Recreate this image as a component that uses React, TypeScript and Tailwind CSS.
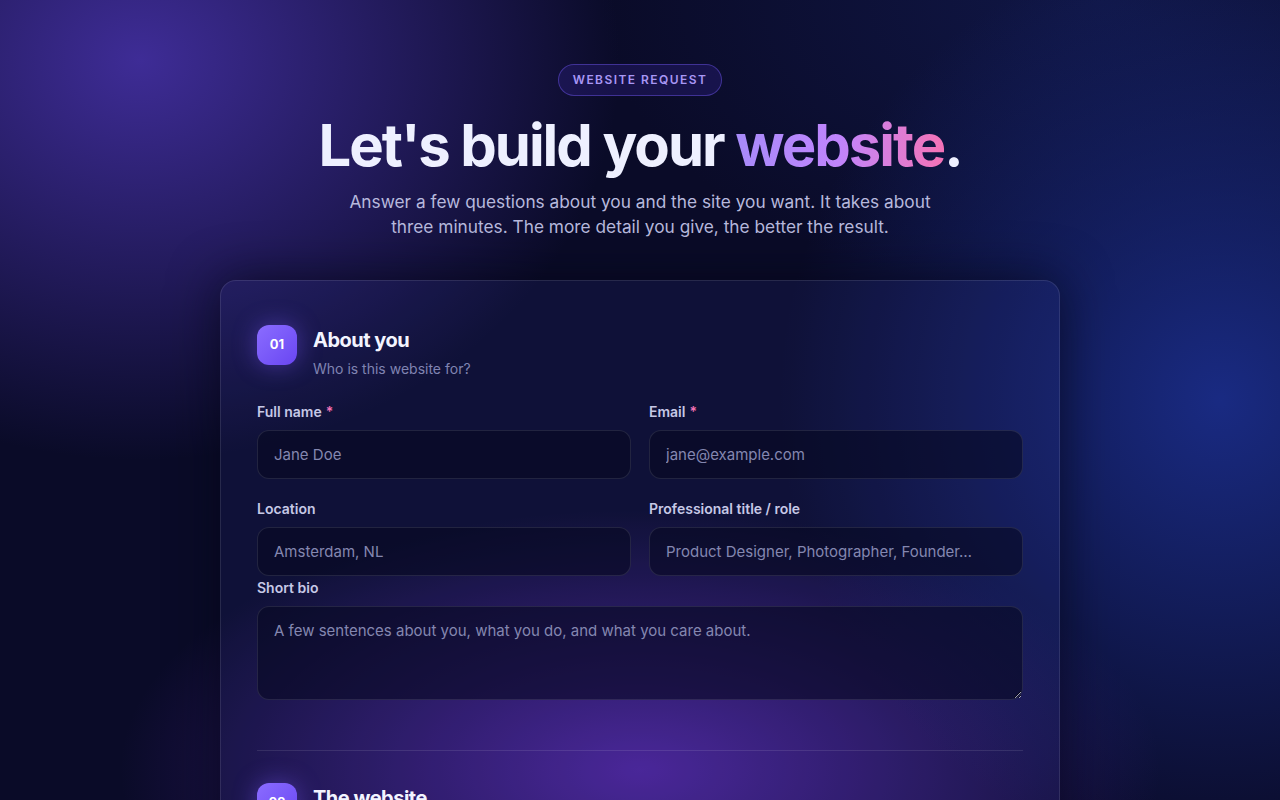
import React from "react";

type FieldProps = {
  label: string;
  placeholder: string;
  required?: boolean;
  type?: string;
};

function Label({ text, required }: { text: string; required?: boolean }) {
  return (
    <label className="block text-sm font-semibold leading-5 text-[#c6c8e6]">
      {text}
      {required && <span className="ml-1 text-[#f472b6]">*</span>}
    </label>
  );
}

function Field({ label, placeholder, required, type = "text" }: FieldProps) {
  return (
    <div className="flex flex-col gap-2">
      <Label text={label} required={required} />
      <input
        type={type}
        placeholder={placeholder}
        className="h-[49px] w-full rounded-xl border border-white/10 bg-[#070822]/60 px-4 text-[15px] text-white placeholder:text-[#8487b0] outline-none"
      />
    </div>
  );
}

function StepHeader({ num, title, sub }: { num: string; title: string; sub: string }) {
  return (
    <div className="flex items-start gap-4">
      <div className="flex h-10 w-10 shrink-0 items-center justify-center rounded-xl bg-gradient-to-br from-[#8b6cff] to-[#6a45f2] text-[13px] font-bold text-white shadow-[0_0_24px_rgba(124,92,255,0.45)]">
        {num}
      </div>
      <div className="flex flex-col">
        <h2 className="text-xl font-bold leading-[30px] tracking-tight text-[#f3f4ff]">{title}</h2>
        <p className="mt-1 text-sm leading-5 text-[#8084b2]">{sub}</p>
      </div>
    </div>
  );
}

export default function App() {
  return (
    <div className="min-h-screen w-full bg-[#0a0b28] bg-[radial-gradient(ellipse_480px_400px_at_140px_60px,rgba(62,44,150,1),transparent),radial-gradient(ellipse_440px_460px_at_1220px_400px,rgba(26,44,135,0.95),transparent),radial-gradient(ellipse_520px_260px_at_640px_770px,rgba(88,40,170,0.85),transparent),radial-gradient(ellipse_500px_300px_at_1100px_0px,rgba(20,30,90,0.6),transparent)] font-['Inter',sans-serif] text-white">
      <main className="mx-auto flex max-w-[840px] flex-col items-center pt-16 pb-20">
        <span className="rounded-full border border-[#5b48c8]/60 bg-[#2a1f7a]/40 px-[14px] py-[7px] text-xs font-semibold uppercase leading-4 tracking-[0.12em] text-[#a897f5]">
          Website request
        </span>
        <h1 className="mt-4 text-center text-[58px] font-bold leading-[66px] tracking-[-0.035em] text-[#eef0ff]">
          Let's build your{" "}
          <span className="bg-gradient-to-r from-[#a78bfa] via-[#c084fc] to-[#f472b6] bg-clip-text text-transparent">
            website
          </span>
          .
        </h1>
        <p className="mt-[11px] max-w-[610px] text-center text-[17.3px] leading-[25px] text-[#b7b9dd]">
          Answer a few questions about you and the site you want. It takes about three minutes. The
          more detail you give, the better the result.
        </p>

        <form className="mt-[41px] w-full rounded-2xl border border-white/10 bg-[#3a40b0]/[0.12] px-9 pt-11 pb-9 shadow-[0_0_50px_rgba(4,5,22,0.7)]">
          <section>
            <StepHeader num="01" title="About you" sub="Who is this website for?" />
            <div className="mt-[23px] grid grid-cols-2 gap-x-[18px] gap-y-5">
              <Field label="Full name" placeholder="Jane Doe" required />
              <Field label="Email" placeholder="jane@example.com" required type="email" />
              <Field label="Location" placeholder="Amsterdam, NL" />
              <Field label="Professional title / role" placeholder="Product Designer, Photographer, Founder…" />
            </div>
            <div className="flex flex-col gap-2 pt-0.5">
              <Label text="Short bio" />
              <textarea
                placeholder="A few sentences about you, what you do, and what you care about."
                className="h-[94px] w-full rounded-xl border border-white/10 bg-[#070822]/60 px-4 py-3 text-[15px] leading-6 text-white placeholder:text-[#8487b0] outline-none"
              />
            </div>
          </section>

          <div className="mt-[50px] mb-8 h-px w-full bg-white/10" />

          <section>
            <StepHeader num="02" title="The website" sub="What kind of site do you need?" />
            <div className="mt-[23px] grid grid-cols-2 gap-x-[18px] gap-y-5">
              <Field label="Website name" placeholder="Jane Doe Studio" />
              <Field label="Domain (if you have one)" placeholder="janedoe.com" />
            </div>
          </section>
        </form>
      </main>
    </div>
  );
}
